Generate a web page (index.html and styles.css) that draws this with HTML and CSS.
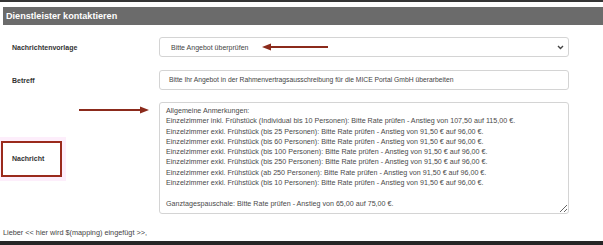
FILE: index.html
```html
<!DOCTYPE html>
<html lang="de">
<head>
    <meta charset="UTF-8">
    <meta name="viewport" content="width=device-width, initial-scale=1.0">
    <title>Dienstleister kontaktieren</title>
    <link rel="stylesheet" href="styles.css">
</head>
<body>
    <div class="page">
        <header class="panel-title">Dienstleister kontaktieren</header>

        <div class="form">
            <div class="label">Nachrichtenvorlage</div>
            <div class="field select">
                <span>Bitte Angebot überprüfen</span>
                <svg class="chevron" width="7" height="5" viewBox="0 0 7 5">
                    <path d="M1 1 L3.5 3.5 L6 1" fill="none" stroke="#444" stroke-width="1.4"/>
                </svg>
            </div>

            <div class="label">Betreff</div>
            <div class="field input">Bitte Ihr Angebot in der Rahmenvertragsausschreibung für die MICE Portal GmbH überarbeiten</div>

            <div class="label label-marked">Nachricht</div>
            <textarea class="field message" readonly>Allgemeine Anmerkungen:
Einzelzimmer inkl. Frühstück (Individual bis 10 Personen): Bitte Rate prüfen - Anstieg von 107,50 auf 115,00 €.
Einzelzimmer exkl. Frühstück (bis 25 Personen): Bitte Rate prüfen - Anstieg von 91,50 € auf 96,00 €.
Einzelzimmer exkl. Frühstück (bis 60 Personen): Bitte Rate prüfen - Anstieg von 91,50 € auf 96,00 €.
Einzelzimmer exkl. Frühstück (bis 100 Personen): Bitte Rate prüfen - Anstieg von 91,50 € auf 96,00 €.
Einzelzimmer exkl. Frühstück (bis 250 Personen): Bitte Rate prüfen - Anstieg von 91,50 € auf 96,00 €.
Einzelzimmer exkl. Frühstück (ab 250 Personen): Bitte Rate prüfen - Anstieg von 91,50 € auf 96,00 €.
Einzelzimmer exkl. Frühstück (bis 10 Personen): Bitte Rate prüfen - Anstieg von 91,50 € auf 96,00 €.

Ganztagespauschale: Bitte Rate prüfen - Anstieg von 65,00 auf 75,00 €.</textarea>
        </div>

        <p class="closing">Lieber &lt;&lt; hier wird $(mapping) eingefügt &gt;&gt;,</p>
        <div class="bottom-bar"></div>

        <!-- annotation arrows -->
        <svg class="arrow arrow-select" width="66" height="8" viewBox="0 0 66 8">
            <line x1="7" y1="4" x2="66" y2="4" stroke="#8b2a1b" stroke-width="2"/>
            <polygon points="0,4 9,0.5 9,7.5" fill="#8b2a1b"/>
        </svg>
        <svg class="arrow arrow-message" width="70" height="8" viewBox="0 0 70 8">
            <line x1="0" y1="4" x2="62" y2="4" stroke="#8b2a1b" stroke-width="2"/>
            <polygon points="70,4 61,0.5 61,7.5" fill="#8b2a1b"/>
        </svg>
    </div>
</body>
</html>
```

FILE: styles.css
```css
* {
    margin: 0;
    padding: 0;
    box-sizing: border-box;
}

body {
    font-family: 'Liberation Sans', Arial, sans-serif;
    background: #fff;
    color: #333;
    height: 245px;
    overflow: hidden;
}

.page {
    position: relative;
    border-top: 2px solid #353535;
    padding-top: 5px;
}

.panel-title {
    margin-left: 3px;
    height: 18px;
    line-height: 18px;
    padding-left: 3px;
    background: #6b6b6b;
    color: #fff;
    font-weight: bold;
    font-size: 9.1px;
}

.form {
    display: grid;
    grid-template-columns: 159px 410px;
    row-gap: 13px;
    margin-top: 12px;
    align-items: center;
}

.label {
    font-size: 7px;
    font-weight: bold;
    color: #333;
    padding-left: 12px;
}

.label-marked {
    width: 61px;
    height: 36px;
    margin-left: 1px;
    padding-left: 9px;
    display: flex;
    align-items: center;
    border: 2px solid #9a2a1c;
    box-shadow: 0 0 0 4px #fdeefb;
}

.field {
    border: 1px solid #d4d4d4;
    border-radius: 3px;
    background: #fff;
    font-family: 'Liberation Sans', Arial, sans-serif;
    color: #444;
}

.select {
    height: 20px;
    display: flex;
    align-items: center;
    justify-content: space-between;
    padding: 0 4px 0 11px;
    font-size: 7px;
}

.input {
    height: 20px;
    line-height: 18px;
    padding-left: 9px;
    font-size: 6.75px;
}

.message {
    display: block;
    width: 410px;
    height: 112px;
    margin-top: -1px;
    padding: 3px 6px;
    font-size: 7.15px;
    line-height: 10.3px;
    color: #4a4a4a;
    resize: vertical;
    overflow: hidden;
    outline: none;
}

.closing {
    font-size: 7.3px;
    color: #444;
    margin: 14px 0 0 3px;
    line-height: 10px;
}

.bottom-bar {
    margin-top: 3px;
    height: 10px;
    background: #262626;
}

.arrow {
    position: absolute;
}

.arrow-select {
    left: 262px;
    top: 41px;
}

.arrow-message {
    left: 79px;
    top: 104px;
}
```
